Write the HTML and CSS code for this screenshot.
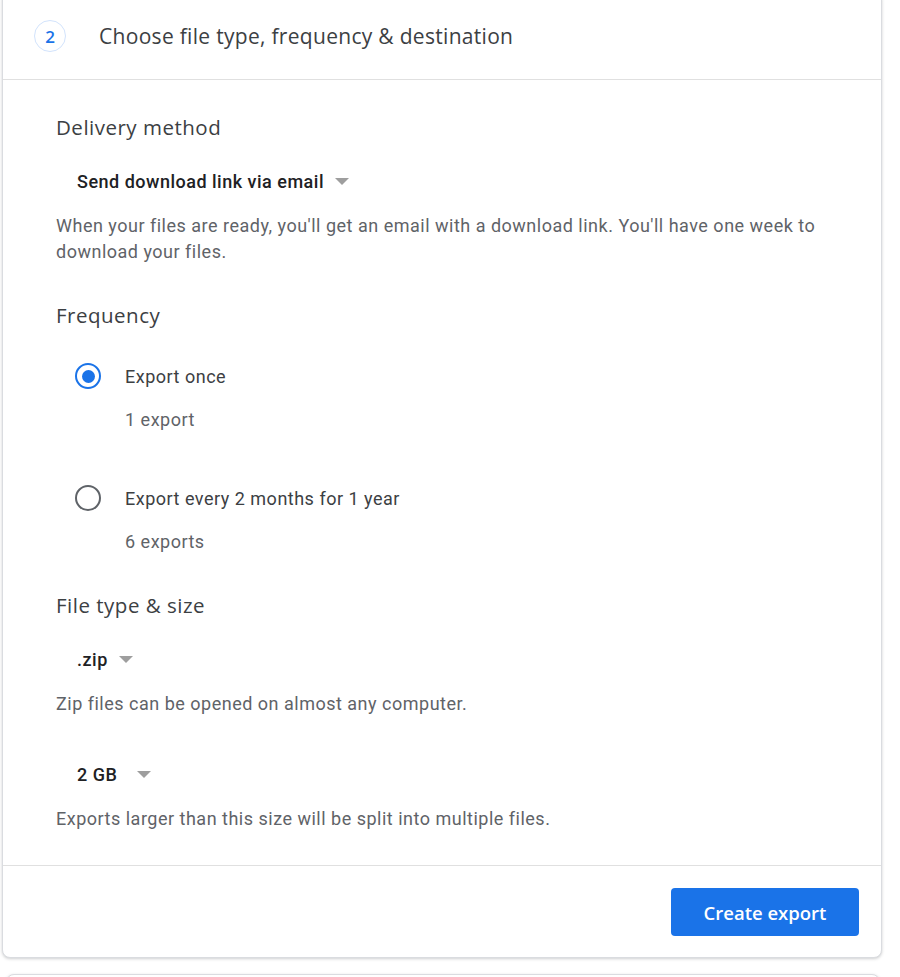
FILE: index.html
```html
<!DOCTYPE html>
<html lang="en">
<head>
<meta charset="utf-8">
<title>Choose file type, frequency &amp; destination</title>
<link rel="stylesheet" href="styles.css">
</head>
<body>
<div class="page">
  <section class="card">
    <header class="card-head">
      <span class="step">2</span>
      <h2 class="title">Choose file type, frequency &amp; destination</h2>
    </header>
    <div class="card-body">
      <h3 class="sec-title sec-first">Delivery method</h3>
      <div class="select sel-delivery"><span>Send download link via email</span><span class="caret"></span></div>
      <p class="desc">When your files are ready, you'll get an email with a download link. You'll have one week to download your files.</p>

      <h3 class="sec-title sec-freq">Frequency</h3>
      <div class="radio-row r1"><span class="radio checked"></span><span class="radio-label">Export once</span></div>
      <p class="radio-sub">1 export</p>
      <div class="radio-row r2"><span class="radio"></span><span class="radio-label">Export every 2 months for 1 year</span></div>
      <p class="radio-sub">6 exports</p>

      <h3 class="sec-title sec-file">File type &amp; size</h3>
      <div class="select sel-type"><span>.zip</span><span class="caret"></span></div>
      <p class="desc">Zip files can be opened on almost any computer.</p>
      <div class="select sel-size"><span>2 GB</span><span class="caret caret-wide"></span></div>
      <p class="desc">Exports larger than this size will be split into multiple files.</p>
    </div>
    <footer class="card-foot">
      <button class="btn-primary" type="button">Create export</button>
    </footer>
  </section>
  <section class="card card-next"></section>
</div>
</body>
</html>
```

FILE: styles.css
```css
html, body {
  margin: 0;
  padding: 0;
  background: #ffffff;
  overflow: hidden;
}

.page {
  padding-left: 2px;
  width: 880px;
}

.card {
  margin-top: -8px;
  width: 878px;
  background: #fff;
  border: 1px solid #dadce0;
  border-radius: 8px;
  box-shadow: 0 1px 3px rgba(60, 64, 67, 0.25);
}

.card-head {
  display: flex;
  align-items: center;
  height: 86px;
  border-bottom: 1px solid #e0e0e0;
}

.step {
  display: flex;
  align-items: center;
  justify-content: center;
  box-sizing: border-box;
  width: 32px;
  height: 32px;
  margin-left: 31px;
  border: 1px solid #d2e3fc;
  border-radius: 50%;
  color: #1a73e8;
  font-family: "Open Sans", "Roboto", sans-serif;
  font-weight: 600;
  font-size: 17px;
}

.title {
  margin: 0 0 0 33px;
  font-family: "Open Sans", "Roboto", sans-serif;
  font-weight: 500;
  font-size: 21px;
  letter-spacing: 0.3px;
  color: #3c4043;
}

.card-body {
  padding: 0 0 33px 53px;
}

.sec-title {
  margin: 0;
  font-family: "Open Sans", "Roboto", sans-serif;
  font-weight: 500;
  font-size: 20.5px;
  letter-spacing: 0.5px;
  line-height: 28px;
  color: #3c4043;
}

.sec-first { padding-top: 33px; }
.sec-freq { margin-top: 36px; }
.sec-file { margin-top: 36px; }

.select {
  display: flex;
  align-items: center;
  margin-left: 21px;
  height: 28px;
  font-family: "Roboto", sans-serif;
  font-weight: 500;
  font-size: 18px;
  letter-spacing: 0.5px;
  color: #202124;
}

.sel-delivery { margin-top: 26px; }
.sel-type { margin-top: 26px; }
.sel-size { margin-top: 43px; }

.caret {
  width: 0;
  height: 0;
  margin-left: 11px;
  border-left: 7px solid transparent;
  border-right: 7px solid transparent;
  border-top: 7px solid #9e9e9e;
}

.caret-wide { margin-left: 20px; }

.desc {
  margin: 18px 0 0;
  font-family: "Roboto", sans-serif;
  font-size: 18px;
  letter-spacing: 0.5px;
  line-height: 26px;
  color: #5f6368;
  max-width: 790px;
}

.radio-row {
  display: flex;
  align-items: center;
  height: 28px;
  margin-left: 19px;
}

.r1 { margin-top: 33px; }
.r2 { margin-top: 51px; }

.radio {
  box-sizing: border-box;
  width: 26px;
  height: 26px;
  border: 2.5px solid #5f6368;
  border-radius: 50%;
  display: flex;
  align-items: center;
  justify-content: center;
}

.radio.checked {
  border-color: #1a73e8;
}

.radio.checked::after {
  content: "";
  width: 13px;
  height: 13px;
  border-radius: 50%;
  background: #1a73e8;
}

.radio-label {
  margin-left: 24px;
  font-family: "Roboto", sans-serif;
  font-size: 18px;
  letter-spacing: 0.5px;
  color: #3c4043;
}

.radio-sub {
  margin: 17px 0 0 69px;
  font-family: "Roboto", sans-serif;
  font-size: 18px;
  letter-spacing: 0.5px;
  line-height: 26px;
  color: #5f6368;
}

.card-foot {
  display: flex;
  justify-content: flex-end;
  padding: 22px 22px 21px;
  border-top: 1px solid #e0e0e0;
}

.btn-primary {
  width: 188px;
  height: 48px;
  border: none;
  border-radius: 4px;
  background: #1a73e8;
  color: #fff;
  font-family: "Open Sans", "Roboto", sans-serif;
  font-weight: 600;
  font-size: 18.5px;
}

.card-next {
  margin: 16px 0 0 4px;
  width: 872px;
  height: 60px;
}
```
